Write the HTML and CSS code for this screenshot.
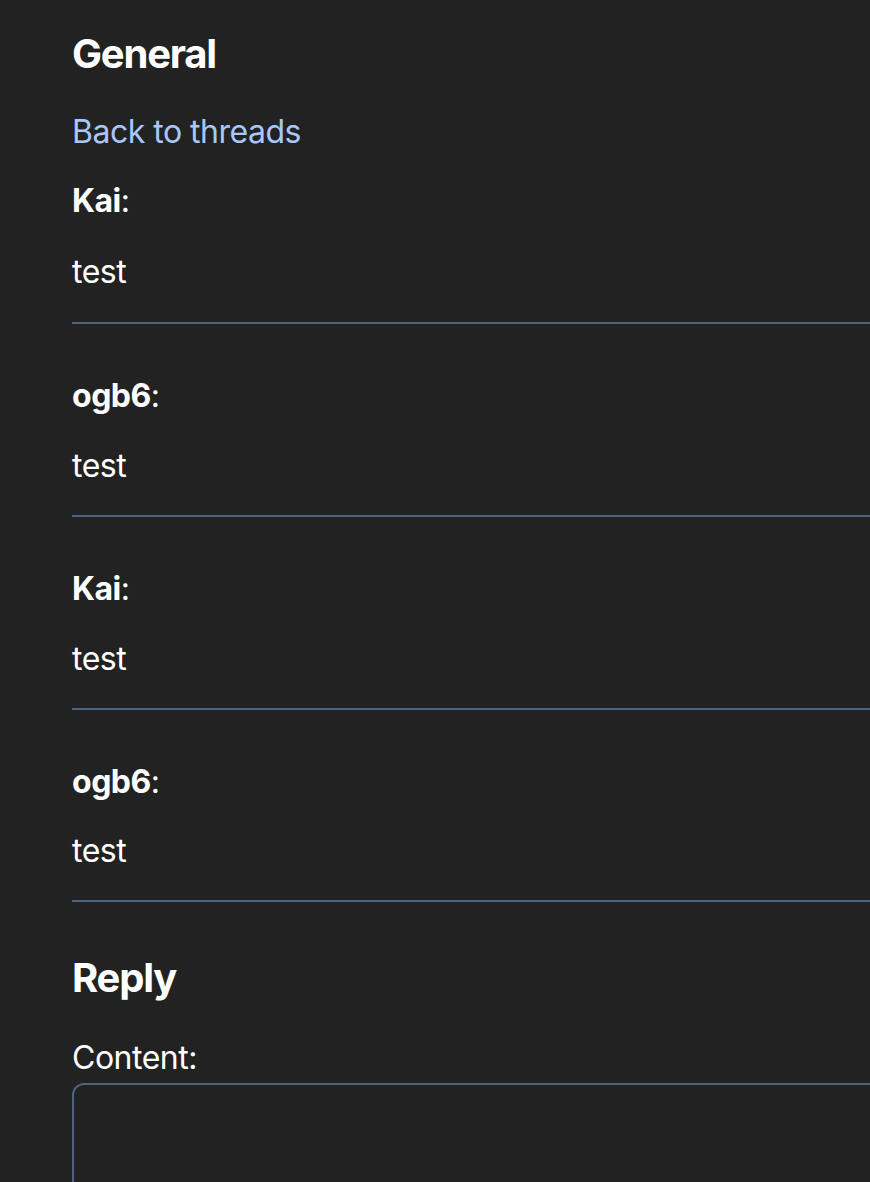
FILE: index.html
```html
<!DOCTYPE html>
<html lang="en">
<head>
  <meta charset="UTF-8" />
  <meta name="viewport" content="width=device-width, initial-scale=1.0"/>
  <title>General</title>
  <link rel="stylesheet" href="styles.css">
</head>
<body>
  <div class="thread">
    <h1>General</h1>
    <p class="back"><a href="#">Back to threads</a></p>

    <div class="post">
      <p class="author"><strong>Kai</strong>:</p>
      <p>test</p>
    </div>
    <div class="post">
      <p class="author"><strong>ogb6</strong>:</p>
      <p>test</p>
    </div>
    <div class="post">
      <p class="author"><strong>Kai</strong>:</p>
      <p>test</p>
    </div>
    <div class="post">
      <p class="author"><strong>ogb6</strong>:</p>
      <p>test</p>
    </div>

    <h2>Reply</h2>
    <form class="reply">
      <label for="content">Content:</label>
      <textarea id="content" rows="4"></textarea>
    </form>
  </div>
</body>
</html>
```

FILE: styles.css
```css
body {
  font-family: Inter, "Noto Sans", sans-serif;
  font-size: 32px;
  line-height: 1.15;
  letter-spacing: -0.5px;
  background-color: #222222;
  color: #ffffff;
  margin: 0;
  padding: 31px 0 0 72px;
  overflow: hidden;
}

h1,
h2 {
  font-size: 40px;
  font-weight: bold;
  letter-spacing: -1.2px;
  margin: 0;
}

h1 {
  margin-bottom: 37px;
}

h2 {
  margin-top: 53px;
  margin-bottom: 39px;
}

p {
  margin: 32px 0;
}

.back {
  margin-top: 0;
  margin-bottom: 32px;
}

a {
  color: #a8c7fa;
  text-decoration: none;
}

.post {
  border-bottom: 2px solid #4b6580;
}

.post .author {
  margin-bottom: 34px;
}

.post p:last-child {
  margin-bottom: 32px;
}

.post + .post {
  padding-top: 22px;
}

.post + .post .author {
  margin-bottom: 33px;
}

.post + .post p:last-child {
  margin-bottom: 30px;
}

.reply label {
  display: block;
  margin-bottom: 6px;
}

.reply textarea {
  display: block;
  width: 900px;
  height: 200px;
  background-color: transparent;
  border: 2px solid #4b6580;
  border-radius: 12px;
  color: #ffffff;
  font: inherit;
  padding: 10px;
  resize: none;
}
```
